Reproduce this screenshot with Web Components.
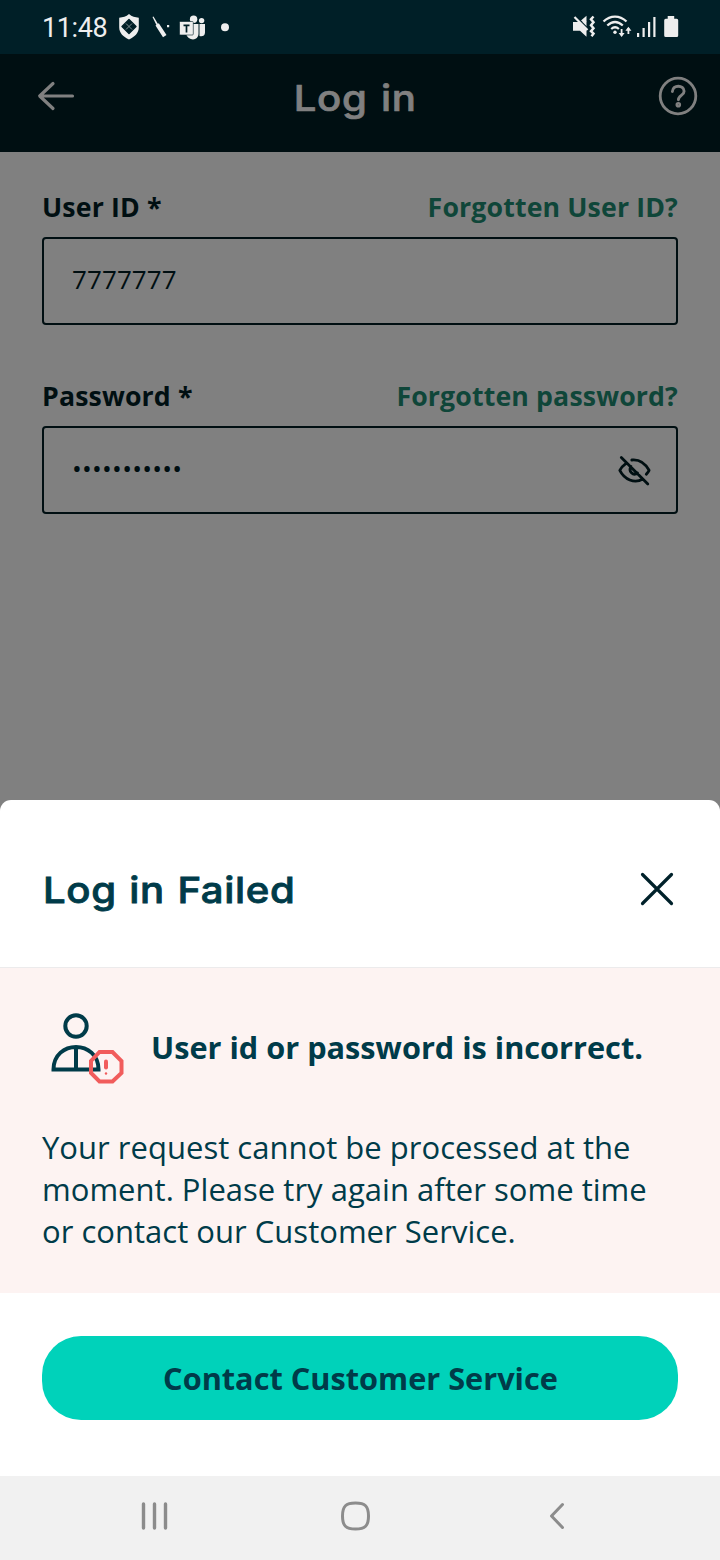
<!DOCTYPE html>
<html lang="en"><head><meta charset="utf-8"><title>Log in</title>
<style>
html,body{margin:0;padding:0}
body{width:720px;height:1560px;background:#808080;font-family:"Open Sans","Noto Sans",sans-serif;color:#003b49;overflow:hidden}
</style></head><body>
<login-screen></login-screen>
<script>
const define=(name,html)=>customElements.define(name,class extends HTMLElement{
  constructor(){super();this.attachShadow({mode:'open'}).innerHTML='<style>*{box-sizing:border-box}svg{display:block;flex:none;overflow:visible}</style>'+html;}
});

define('status-bar',`<style>
:host{display:flex;height:54px;background:#001f27;justify-content:space-between;color:#eee}
.left{display:flex;align-items:center;padding-left:42px}
.time{font:27px/54px Roboto,sans-serif;letter-spacing:-.4px;width:76px;white-space:nowrap;padding-top:1px}
</style>
<div class="left"><span class="time">11:48</span>
<svg width="120" height="54" viewBox="118 0 120 54" fill="#eee">
<path d="M129 14c3 2.600 6 3.400 9.800 3.700v9.600c0 6-4.300 9.700-9.800 12.100-5.500-2.400-9.800-6.100-9.800-12.100v-9.600c3.800-.3 6.800-1.100 9.800-3.700z"/>
<path d="M129 19.500l7 7-7 7-7-7z" fill="#001f27" stroke="#001f27" stroke-width="1.400" stroke-linejoin="round"/><path d="M126 23.500l6 6M132 23.500l-6 6" stroke="#8a9698" stroke-width=".9"/>
<path d="M152.500 17l1-.5 6 10-2 .7zM155.500 25.500l3.300-2.300L166.500 35l-3.500 2.200zM167 25h2.200v2.200H167z"/>
<circle cx="193.600" cy="19.300" r="3.700"/><circle cx="201.600" cy="20.600" r="2.700"/>
<path d="M187 24h11.500v9.500c0 8-10.500 7.500-12.500.5zM199.500 24h5.500v8.500c0 3.500-3 4.200-5.500 3.500z"/>
<rect x="179.500" y="21.500" width="13.800" height="13.500" rx="1" stroke="#001f27" stroke-width=".6"/>
<path d="M183.500 25.400h6M186.500 25.400v7" stroke="#001f27" stroke-width="1.700"/>
<circle cx="225" cy="27.200" r="4"/></svg></div>
<svg width="160" height="54" viewBox="560 0 160 54" fill="#eee">
<path d="M573 22h5.500l8-0.500v15.300l-6.500-6h-7zM581 20.500l5.500-4.800v10z"/>
<path d="M574.500 15.500l14 14" stroke="#001f27" stroke-width="2"/><path d="M574.500 17l13 13" stroke="#eee" stroke-width="2.200"/>
<path d="M593.500 16.500l-2.500 2.700 2.500 3-2.500 3 2.500 3-2.500 3 2.500 2.500-2 2.500" fill="none" stroke="#eee" stroke-width="2.500"/>
<g fill="none" stroke="#eee" stroke-width="2.300"><path d="M603.500 21.500c7-6.500 16-6.500 23 0M607.300 25.500c5-4.500 10.500-4.500 15.500 0M611.200 29c2.500-2.200 5.200-2.200 7.700 0"/></g>
<circle cx="615" cy="32.200" r="1.700"/>
<path d="M621.600 29v6M628.400 34v-6" stroke="#eee" stroke-width="1.800"/><path d="M618.600 33h6l-3 4zM625.400 30.700h6l-3-4z"/>
<path d="M637 33h2.200v4H637zM642.500 28h2.200v9h-2.200zM648 22h2.200v15H648zM653.300 17h2.200v20h-2.200z"/>
<path d="M667.700 16h6.500v2.700h2.500q1.500 0 1.500 1.500V35.500q0 1.500-1.500 1.500h-11q-1.500 0-1.500-1.500V20.200q0-1.500 1.500-1.500h2z"/>
</svg>`);

define('app-header',`<style>
:host{display:flex;height:98px;background:#000f12;color:#808080;align-items:center;justify-content:space-between;padding:0 22px 0 37px}
.title{flex:1;text-align:center;font:500 36px/50px Inter,sans-serif;letter-spacing:.6px;word-spacing:2px;-webkit-text-stroke:.7px currentColor;padding:0 23px 11px 0}
.title span{display:inline-block;transform:scaleX(1.115)}
svg{fill:none;stroke:#808080;stroke-width:3.200;stroke-linecap:round;stroke-linejoin:round}
.back,.help{margin-bottom:14px}
</style>
<svg class="back" width="38" height="32" viewBox="37 80 38 32"><path d="M40 96h32.500M53 83.500L39.700 96 53 108.500"/></svg>
<span class="title"><span><slot></slot></span></span>
<svg class="help" width="40" height="40" viewBox="658 76 40 40"><circle cx="678" cy="96" r="17.800" stroke-width="2.800"/><path d="M672.400 91.500c.3-7.200 11.600-6.900 11.700-.2 0 4.200-5.700 4-5.700 8.500" stroke-width="2.900"/><circle cx="678.300" cy="104.800" r="1.200"/></svg>`);

define('form-field',`<style>
:host{display:block}
.row{display:flex;justify-content:space-between;font-weight:700;font-size:26.700px;letter-spacing:.14px;line-height:36px;color:#000f12;white-space:nowrap}
.link{color:#0f4639}
.box{margin-top:12px;height:88px;border:2px solid #000f12;border-radius:4px;padding:0 25px 0 28px;display:flex;align-items:center;justify-content:space-between;font-size:26px;letter-spacing:var(--track,.1px);color:#000f12}
.value{padding-bottom:4px}
</style>
<div class="row"><slot name="label"></slot><span class="link"><slot name="link"></slot></span></div>
<div class="box"><span class="value"><slot></slot></span><slot name="icon"></slot></div>`);

define('hidden-eye',`<style>:host{display:block}</style>
<svg width="34" height="32" viewBox="617 454 34 32" fill="none" stroke="#000f12" stroke-width="2.800" stroke-linecap="round" stroke-linejoin="round"><path d="M621.300 457.500l26.500 26.500M625.500 463.800c-2.500 1.700-4.500 4.300-5.700 6.500 4.500 8.800 14.500 14 23 8.700M631.800 460c7.500-.8 13.700 4 17.300 10.300-.7 1.400-1.700 2.800-2.800 4M631 466.500c-3 4.800 2 9.800 6.600 6.500"/></svg>`);

define('sheet-header',`<style>
:host{display:flex;height:168px;border-bottom:1px solid #ecebec;justify-content:space-between;align-items:center;padding:10px 46px 0 43px}
.title{font:500 36px/50px Inter,sans-serif;letter-spacing:.6px;word-spacing:1px;-webkit-text-stroke:.8px currentColor;white-space:nowrap;padding-top:3px;transform:scaleX(1.115);transform-origin:left}
</style><span class="title"><slot></slot></span>
<svg width="34" height="34" viewBox="0 0 34 34" fill="none" stroke="#00212a" stroke-width="3.200" stroke-linecap="round"><path d="M2.500 2.500l29 29M31.500 2.500l-29 29"/></svg>`);

define('error-panel',`<style>
:host{display:block;height:325px;background:#fdf3f2;padding:40px 42px 0}
.head{display:flex;height:80px;align-items:center}
.msg{font-weight:700;font-size:30.700px;line-height:42px;margin-left:27px;padding-bottom:2px;white-space:nowrap}
.body{font-size:31px;letter-spacing:.02px;line-height:42px;margin-top:38px;white-space:nowrap}
</style>
<div class="head"><svg width="82" height="80" viewBox="42 1008 82 80" fill="none" stroke="#003b49" stroke-width="4"><circle cx="76" cy="1026" r="10.700"/><path d="M53.500 1069.500c0-30 45-30 45 0zM76 1047v22"/><path d="M99.500 1052h13l9 9v12l-9 8.500h-13l-8.500-8.500v-12z" stroke="#f15c5c"/><path d="M106 1061.500v6" stroke="#f15c5c" stroke-linecap="round"/><circle cx="106" cy="1073.500" r="1.200" fill="#f15c5c" stroke="none"/></svg>
<span class="msg"><slot name="title"></slot></span></div>
<div class="body"><slot></slot></div>`);

define('action-button',`<style>
:host{display:flex;height:84px;border-radius:39px;background:#00d2ba;align-items:center;justify-content:center;font-weight:700;font-size:30.700px;line-height:42px;white-space:nowrap;padding:0 0 1px 1px;box-sizing:border-box}
</style><span><slot></slot></span>`);

define('bottom-sheet',`<style>
:host{display:block;height:676px;background:#fff;border-radius:11px 11px 0 0}
.actions{padding:43px 42px 0}
</style><slot name="header"></slot><slot></slot><div class="actions"><slot name="action"></slot></div>`);

define('nav-bar',`<style>
:host{display:flex;height:84px;box-sizing:border-box;background:#f1f1f1;align-items:center;padding:0 0 4px 141px}
svg{fill:none;stroke:#8c8c8c;stroke-width:3;stroke-linecap:round;stroke-linejoin:round}
.home{margin:0 179px 0 173px}
</style>
<svg width="27" height="30" viewBox="0 0 27 30"><path d="M2.500 3v24M13.500 3v24M24.500 3v24" stroke-width="3.400"/></svg>
<svg class="home" width="29" height="30" viewBox="0 0 29 30"><path d="M14.500 2C24 2 27.500 5 27.500 15s-3.500 13-13 13-13-3-13-13 3.500-13 13-13z"/></svg>
<svg width="16" height="30" viewBox="0 0 16 30"><path d="M13.500 3.500L2.500 15l11 11.500"/></svg>`);

define('login-screen',`<style>
:host{display:flex;flex-direction:column;width:720px;height:1560px;background:#808080}
main{flex:1;padding:37px 42px 0;display:flex;flex-direction:column;gap:53px}
.password{--track:.25px}
</style>
<status-bar></status-bar><app-header>Log in</app-header>
<main>
<form-field><span slot="label">User ID *</span><span slot="link">Forgotten User ID?</span>7777777</form-field>
<form-field class="password"><span slot="label">Password *</span><span slot="link">Forgotten password?</span>•••••••••••<hidden-eye slot="icon"></hidden-eye></form-field>
</main>
<bottom-sheet><sheet-header slot="header">Log in Failed</sheet-header>
<error-panel><span slot="title">User id or password is incorrect.</span>Your request cannot be processed at the<br>moment. Please try again after some time<br>or contact our Customer Service.</error-panel>
<action-button slot="action">Contact Customer Service</action-button></bottom-sheet>
<nav-bar></nav-bar>`);
</script></body></html>
